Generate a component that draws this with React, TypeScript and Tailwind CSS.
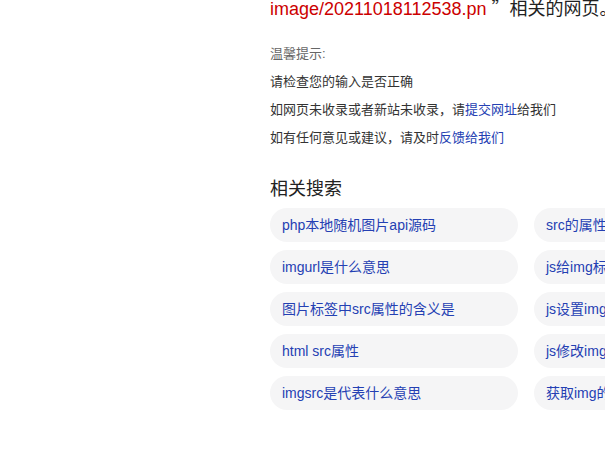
const related = [
  ['php本地随机图片api源码', 'src的属性是什么'],
  ['imgurl是什么意思', 'js给img标签添加src'],
  ['图片标签中src属性的含义是', 'js设置img的src'],
  ['html src属性', 'js修改img的src'],
  ['imgsrc是代表什么意思', '获取img的src'],
];

export default function App() {
  return (
    <div
      className="h-screen w-screen overflow-hidden bg-white pl-[270px] text-[#333]"
      style={{ fontFamily: '"Liberation Sans", Arial, "Noto Sans CJK SC", sans-serif' }}
    >
      {/* no-result message */}
      <div className="-mt-[4px] h-[24px] whitespace-nowrap text-[18px] leading-[22px] text-[#222]">
        <span className="text-[#cc0000]">image/20211018112538.pn</span>
        <span className="ml-[5px] font-['Noto_Sans_CJK_SC',sans-serif]">”相关的网页。</span>
      </div>

      {/* tips */}
      <div className="mt-[20px] text-[13px] whitespace-nowrap">
        <p className="h-[28px] leading-[28px] text-[#666]">温馨提示:</p>
        <p className="h-[28px] leading-[28px]">请检查您的输入是否正确</p>
        <p className="h-[28px] leading-[28px]">
          如网页未收录或者新站未收录，请<a className="text-[#2440b3]">提交网址</a>给我们
        </p>
        <p className="h-[28px] leading-[28px]">
          如有任何意见或建议，请及时<a className="text-[#2440b3]">反馈给我们</a>
        </p>
      </div>

      {/* related searches */}
      <h3 className="mt-[25px] text-[18px] leading-[24px] text-[#222]">相关搜索</h3>
      <div className="mt-[7px] grid w-max grid-cols-[248px_248px] gap-x-4 gap-y-2">
        {related.flat().map((q) => (
          <a
            key={q}
            className="flex h-[34px] items-center overflow-hidden whitespace-nowrap rounded-full bg-[#f5f5f6] px-3 pt-px text-[14px] text-[#2440b3]"
          >
            {q}
          </a>
        ))}
      </div>
    </div>
  );
}
